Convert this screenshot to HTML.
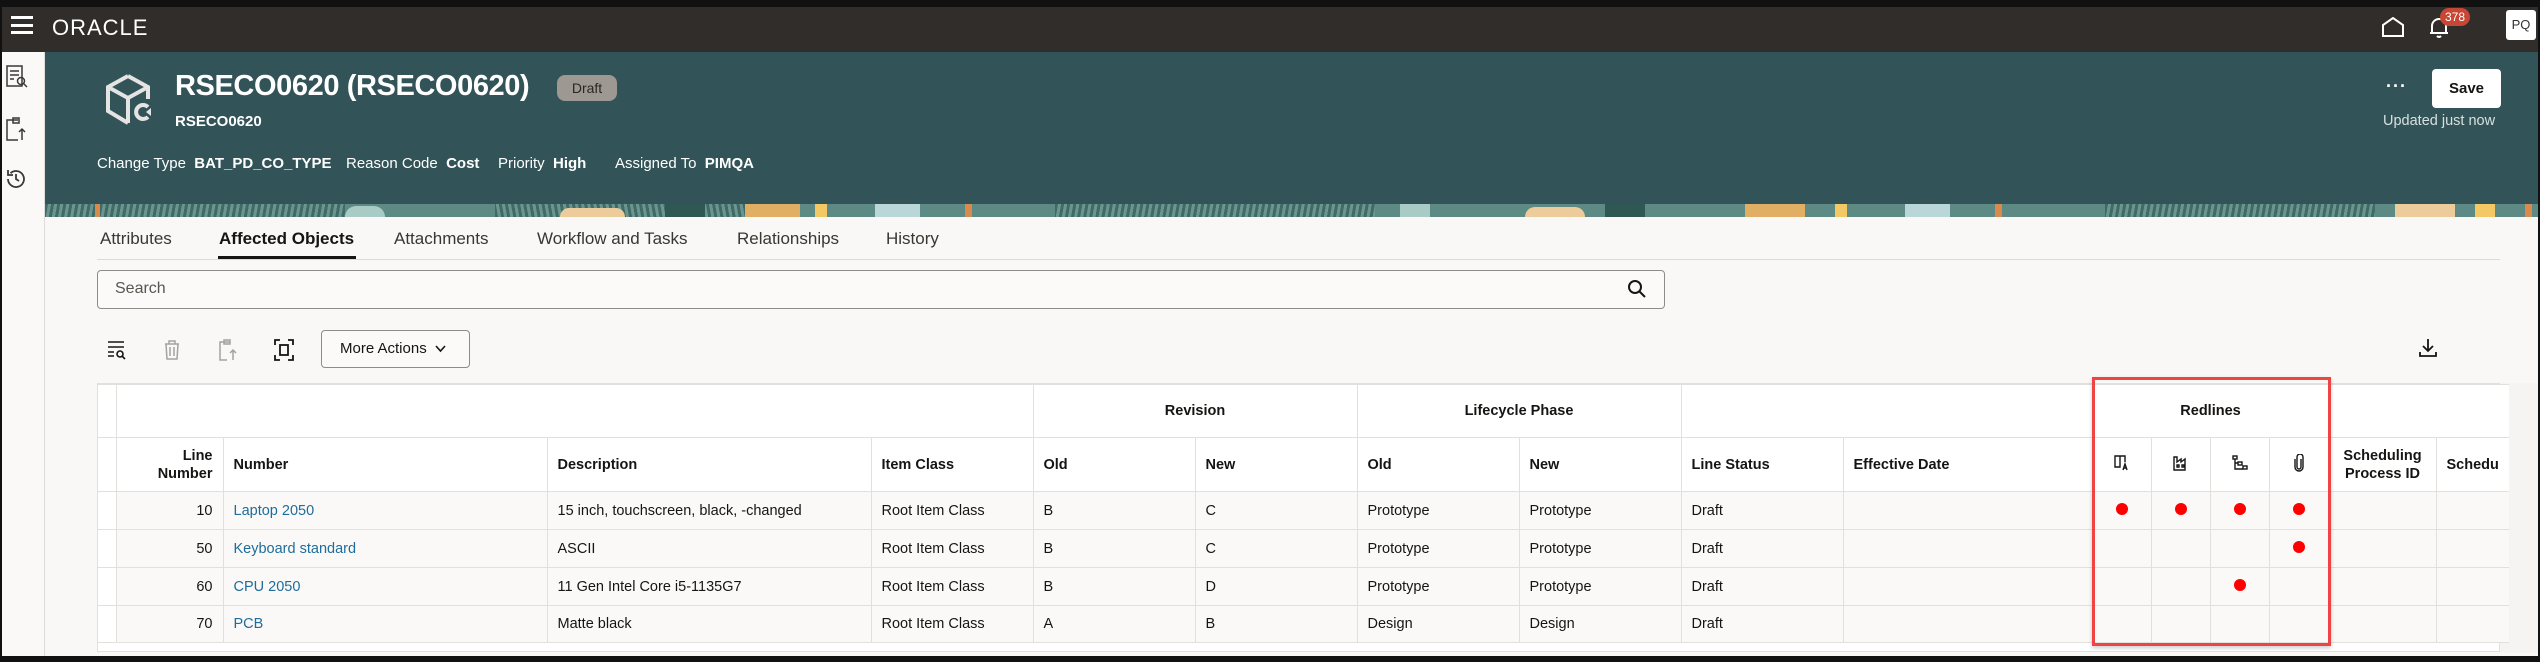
<!DOCTYPE html>
<html><head><meta charset="utf-8">
<style>
*{box-sizing:border-box;margin:0;padding:0}
body{width:2540px;height:662px;overflow:hidden;background:#111;font-family:"Liberation Sans",sans-serif;color:#161513;position:relative}
.a{position:absolute}
#nav{left:2px;top:7px;width:2536px;height:45px;background:#312d2a}
#side{left:2px;top:52px;width:43px;height:604px;background:#fbf9f8;border-right:1px solid #ddd}
#main{left:45px;top:52px;width:2493px;height:604px;background:#f9f8f6}
#hdr{left:45px;top:52px;width:2493px;height:152px;background:#325357}
#strip{left:45px;top:204px;width:2493px;height:13px;background:#5d8a84;overflow:hidden}
.t{white-space:nowrap}
.tab{top:229px;font-size:17px;color:#3a3631}
table{border-collapse:collapse;position:absolute;left:98px;top:384px;font-size:14.5px;table-layout:fixed}
td,th{border:1px solid #e2e0dd;padding:0 10px;white-space:nowrap;overflow:hidden}
th{font-weight:bold;text-align:left;background:#fff}
td{background:#faf9f7}
.lk{color:#1e6d9c}
.dot{display:inline-block;width:12px;height:12px;border-radius:50%;background:#f00}
td.s,th.s{padding:0;background:#fff;border-left:none}
</style></head><body>
<div class="a" id="nav"></div>
<div class="a t" style="left:11px;top:16px;width:22px;height:18px;border-top:3px solid #fff;border-bottom:3px solid #fff"><div style="margin-top:4.5px;height:3px;background:#fff"></div></div>
<div class="a t" style="left:52px;top:15px;color:#fff;font-size:22px;letter-spacing:1px">ORACLE</div>
<svg class="a" style="left:2380px;top:17px" width="26" height="20" viewBox="0 0 26 20"><path d="M3 19V8L13 1L23 8V19Z" fill="none" stroke="#fff" stroke-width="2"/></svg>
<svg class="a" style="left:2427px;top:16px" width="24" height="24" viewBox="0 0 24 24"><path d="M5 17V10a7 7 0 0 1 14 0v7H5M3 17h18M10 20q2 2 4 0" fill="none" stroke="#fff" stroke-width="2"/></svg>
<div class="a t" style="left:2440px;top:8px;width:30px;height:18px;border-radius:9px;background:#c74634;color:#fff;font-size:12px;text-align:center;line-height:18px">378</div>
<div class="a t" style="left:2506px;top:10px;width:30px;height:30px;background:#fff;border-radius:3px;font-size:13px;text-align:center;line-height:30px;color:#333">PQ</div>
<div class="a" id="side"></div>
<svg class="a" style="left:6px;top:65px" width="22" height="24" viewBox="0 0 22 24" fill="none" stroke="#3b3835" stroke-width="1.5"><rect x="1" y="1" width="15" height="20"/><path d="M4 6h9M4 10h9M4 14h4"/><circle cx="15" cy="16" r="3.5"/><path d="M17.5 18.5L21 22"/></svg>
<svg class="a" style="left:6px;top:117px" width="22" height="24" viewBox="0 0 22 24" fill="none" stroke="#3b3835" stroke-width="1.5"><path d="M12 3H1v20h11M7 1h6v5H7zM16 23V12M13 15l3-3 3 3"/></svg>
<svg class="a" style="left:5px;top:168px" width="22" height="22" viewBox="0 0 22 22" fill="none" stroke="#3b3835" stroke-width="1.8"><path d="M3 11a8 8 0 1 0 2.5-5.8M3 2v5h5M11 6v5l3 2"/></svg>
<div class="a" id="main"></div>
<div class="a" id="hdr"></div>
<div class="a" id="strip">
<div class="a" style="left:0;top:0;width:300px;height:13px;background:repeating-linear-gradient(100deg,#3f6a66 0 3px,#6b9690 3px 6px)"></div>
<div class="a" style="left:50px;top:0;width:5px;height:13px;background:#d98a4d"></div>
<div class="a" style="left:300px;top:2px;width:40px;height:11px;background:#a9cbc6;border-radius:20px 20px 0 0"></div>
<div class="a" style="left:450px;top:0;width:260px;height:13px;background:repeating-linear-gradient(80deg,#3f6a66 0 3px,#6b9690 3px 6px)"></div>
<div class="a" style="left:515px;top:4px;width:65px;height:9px;background:#ebcc9a;border-radius:20px 20px 0 0"></div>
<div class="a" style="left:620px;top:0;width:40px;height:13px;background:#2f5753"></div>
<div class="a" style="left:700px;top:0;width:55px;height:13px;background:#e0af63"></div>
<div class="a" style="left:770px;top:0;width:12px;height:13px;background:#f2c964"></div>
<div class="a" style="left:830px;top:0;width:45px;height:13px;background:#b9d7d8"></div>
<div class="a" style="left:920px;top:0;width:7px;height:13px;background:#d98a4d"></div>
<div class="a" style="left:1010px;top:0;width:320px;height:13px;background:repeating-linear-gradient(100deg,#3f6a66 0 3px,#6b9690 3px 6px)"></div>
<div class="a" style="left:1355px;top:0;width:30px;height:13px;background:#a9cbc6"></div>
<div class="a" style="left:1480px;top:3px;width:60px;height:10px;background:#ebcc9a;border-radius:20px 20px 0 0"></div>
<div class="a" style="left:1560px;top:0;width:40px;height:13px;background:#2f5753"></div>
<div class="a" style="left:1700px;top:0;width:60px;height:13px;background:#e0af63"></div>
<div class="a" style="left:1790px;top:0;width:12px;height:13px;background:#f2c964"></div>
<div class="a" style="left:1860px;top:0;width:45px;height:13px;background:#b9d7d8"></div>
<div class="a" style="left:1950px;top:0;width:7px;height:13px;background:#d98a4d"></div>
<div class="a" style="left:2060px;top:0;width:270px;height:13px;background:repeating-linear-gradient(100deg,#3f6a66 0 3px,#6b9690 3px 6px)"></div>
<div class="a" style="left:2350px;top:0;width:60px;height:13px;background:#ebcc9a"></div>
<div class="a" style="left:2430px;top:0;width:20px;height:13px;background:#f2c964"></div>
<div class="a" style="left:2480px;top:0;width:7px;height:13px;background:#d98a4d"></div>
</div>
<svg class="a" style="left:104px;top:73px" width="50" height="55" viewBox="0 0 50 55" fill="none" stroke="#e4e4e4" stroke-width="4"><path d="M24 3L44 14V26M24 3L4 14V38L24 50M4 14L24 25V50M24 25L44 14"/><path d="M44 34a7 7 0 1 0 0 10" stroke-width="4"/><path d="M47 35l-5 4 5 4z" fill="#e4e4e4" stroke="none"/></svg>
<div class="a t" style="left:175px;top:70px;color:#fff;font-size:29px;font-weight:bold;letter-spacing:-0.4px">RSECO0620 (RSECO0620)</div>
<div class="a t" style="left:557px;top:75px;width:60px;height:26px;border-radius:8px;background:#9e9892;color:#2a2622;font-size:14px;text-align:center;line-height:26px">Draft</div>
<div class="a t" style="left:175px;top:113px;color:#fff;font-size:15px;font-weight:bold">RSECO0620</div>
<div class="a t" style="left:97px;top:155px;color:#fff;font-size:15px">Change Type &nbsp;<b>BAT_PD_CO_TYPE</b></div>
<div class="a t" style="left:346px;top:155px;color:#fff;font-size:15px">Reason Code &nbsp;<b>Cost</b></div>
<div class="a t" style="left:498px;top:155px;color:#fff;font-size:15px">Priority &nbsp;<b>High</b></div>
<div class="a t" style="left:615px;top:155px;color:#fff;font-size:15px">Assigned To &nbsp;<b>PIMQA</b></div>
<div class="a t" style="left:2386px;top:76px;color:#fff;font-size:18px;font-weight:bold;letter-spacing:1px">···</div>
<div class="a t" style="left:2432px;top:69px;width:69px;height:39px;background:#fff;border-radius:4px;font-size:15px;font-weight:bold;text-align:center;line-height:39px">Save</div>
<div class="a t" style="left:2383px;top:113px;color:#d7e0e0;font-size:14.5px">Updated just now</div>
<div class="a tab t" style="left:100px">Attributes</div>
<div class="a tab t" style="left:219px;color:#161513;font-weight:bold">Affected Objects</div>
<div class="a" style="left:218px;top:256px;width:138px;height:3px;background:#161513"></div>
<div class="a tab t" style="left:394px">Attachments</div>
<div class="a tab t" style="left:537px">Workflow and Tasks</div>
<div class="a tab t" style="left:737px">Relationships</div>
<div class="a tab t" style="left:886px">History</div>
<div class="a" style="left:97px;top:259px;width:2403px;height:1px;background:#dcdad7"></div>
<div class="a" style="left:97px;top:270px;width:1568px;height:39px;border:1px solid #8f8b86;border-radius:4px;background:#fbfaf9"></div>
<div class="a t" style="left:115px;top:280px;font-size:16px;color:#5a5550">Search</div>
<svg class="a" style="left:1627px;top:279px" width="20" height="20" viewBox="0 0 20 20" fill="none" stroke="#161513" stroke-width="2"><circle cx="8" cy="8" r="6"/><path d="M12.5 12.5L18 18"/></svg>
<svg class="a" style="left:107px;top:340px" width="20" height="20" viewBox="0 0 20 20" fill="none" stroke="#161513" stroke-width="1.6"><path d="M1 2h16M1 7h16M1 12h6M1 16h6"/><circle cx="13" cy="14" r="3"/><path d="M15 16l3 3"/></svg>
<svg class="a" style="left:163px;top:340px" width="18" height="20" viewBox="0 0 18 20" fill="none" stroke="#a6a29d" stroke-width="1.5"><path d="M2 4h14M6 4V1h6v3M3 4l1 15h10l1-15M7 7v9M11 7v9"/></svg>
<svg class="a" style="left:219px;top:339px" width="18" height="22" viewBox="0 0 18 22" fill="none" stroke="#a6a29d" stroke-width="1.5"><path d="M11 3H1v18h7M5 1h6v4H5zM14 21V11M11 14l3-3 3 3"/></svg>
<svg class="a" style="left:274px;top:339px" width="20" height="22" viewBox="0 0 20 22" fill="none" stroke="#161513" stroke-width="1.8"><path d="M1 6V1h5M14 1h5v5M1 16v5h5M14 21h5v-5"/><rect x="6" y="6" width="8" height="10"/></svg>
<div class="a t" style="left:321px;top:330px;width:149px;height:38px;border:1px solid #8f8b86;border-radius:4px;font-size:15px;line-height:36px;padding-left:18px;background:#fbfaf9">More Actions &nbsp;<svg width="11" height="8" viewBox="0 0 11 8" fill="none" stroke="#161513" stroke-width="1.6"><path d="M1 1l4.5 5L10 1"/></svg></div>
<svg class="a" style="left:2418px;top:338px" width="20" height="20" viewBox="0 0 20 20" fill="none" stroke="#161513" stroke-width="1.8"><path d="M10 1v12M5 8l5 5 5-5M2 14v4h16v-4"/></svg>
<div class="a" style="left:97px;top:383px;width:2403px;height:269px;background:#fff;border:1px solid #e2e0dd"></div>
<div class="a" style="left:2500px;top:383px;width:38px;height:270px;background:#f5f4f2"></div>
<table>
<colgroup><col style="width:18px"><col style="width:107px"><col style="width:324px"><col style="width:324px"><col style="width:162px"><col style="width:162px"><col style="width:162px"><col style="width:162px"><col style="width:162px"><col style="width:162px"><col style="width:249px"><col style="width:59px"><col style="width:59px"><col style="width:59px"><col style="width:60px"><col style="width:107px"><col style="width:63px"></colgroup>
<tr style="height:53px"><th class="s"></th><th colspan="4"></th><th colspan="2" style="text-align:center">Revision</th><th colspan="2" style="text-align:center">Lifecycle Phase</th><th colspan="2"></th><th colspan="4" style="text-align:center">Redlines</th><th colspan="2" style="border-right:none"></th></tr>
<tr style="height:54px"><th class="s"></th><th style="text-align:right;line-height:18px">Line<br>Number</th><th>Number</th><th>Description</th><th>Item Class</th><th>Old</th><th>New</th><th>Old</th><th>New</th><th>Line Status</th><th>Effective Date</th>
<th style="text-align:center"><svg width="16" height="16" viewBox="0 0 16 16" fill="none" stroke="#161513" stroke-width="1.4"><path d="M1 1h5v11H1zM6 1h5v6M9 15l2-6 2 6M10 13h2"/></svg></th>
<th style="text-align:center"><svg width="16" height="16" viewBox="0 0 16 16" fill="none" stroke="#161513" stroke-width="1.4"><path d="M1 15V2h3v5l4-3v3l4-3v11zM4 10h2v2H4zM9 10h2v2H9z"/></svg></th>
<th style="text-align:center"><svg width="16" height="16" viewBox="0 0 16 16" fill="none" stroke="#161513" stroke-width="1.4"><rect x="1" y="1" width="4" height="3"/><rect x="6" y="7" width="4" height="3"/><rect x="11" y="11" width="4" height="3"/><path d="M3 4v10h8M3 8h3"/></svg></th>
<th style="text-align:center"><svg width="12" height="18" viewBox="0 0 12 18" fill="none" stroke="#161513" stroke-width="1.4"><path d="M8 5v8a2 2 0 0 1-4 0V3a3 3 0 0 1 6 0v10a4 4 0 0 1-8 0V5"/></svg></th>
<th style="text-align:center;line-height:18px">Scheduling<br>Process ID</th><th style="border-right:none">Schedu</th></tr>
<tr style="height:38px"><td class="s"></td><td style="text-align:right">10</td><td class="lk">Laptop 2050</td><td>15 inch, touchscreen, black, -changed</td><td>Root Item Class</td><td>B</td><td>C</td><td>Prototype</td><td>Prototype</td><td>Draft</td><td></td><td style="text-align:center"><span class="dot"></span></td><td style="text-align:center"><span class="dot"></span></td><td style="text-align:center"><span class="dot"></span></td><td style="text-align:center"><span class="dot"></span></td><td></td><td style="border-right:none"></td></tr>
<tr style="height:38px"><td class="s"></td><td style="text-align:right">50</td><td class="lk">Keyboard standard</td><td>ASCII</td><td>Root Item Class</td><td>B</td><td>C</td><td>Prototype</td><td>Prototype</td><td>Draft</td><td></td><td></td><td></td><td></td><td style="text-align:center"><span class="dot"></span></td><td></td><td style="border-right:none"></td></tr>
<tr style="height:38px"><td class="s"></td><td style="text-align:right">60</td><td class="lk">CPU 2050</td><td>11 Gen Intel Core i5-1135G7</td><td>Root Item Class</td><td>B</td><td>D</td><td>Prototype</td><td>Prototype</td><td>Draft</td><td></td><td></td><td></td><td style="text-align:center"><span class="dot"></span></td><td></td><td></td><td style="border-right:none"></td></tr>
<tr style="height:37px"><td class="s"></td><td style="text-align:right">70</td><td class="lk">PCB</td><td>Matte black</td><td>Root Item Class</td><td>A</td><td>B</td><td>Design</td><td>Design</td><td>Draft</td><td></td><td></td><td></td><td></td><td></td><td></td><td style="border-right:none"></td></tr>
</table>
<div class="a" style="left:2092px;top:377px;width:239px;height:269px;border:3px solid #ef4444;box-shadow:0 2px 4px rgba(0,0,0,.2)"></div>
<div class="a" style="left:0;top:656px;width:2540px;height:6px;background:#111"></div>
<div class="a" style="left:2538px;top:0;width:2px;height:662px;background:#111"></div>
</body></html>
